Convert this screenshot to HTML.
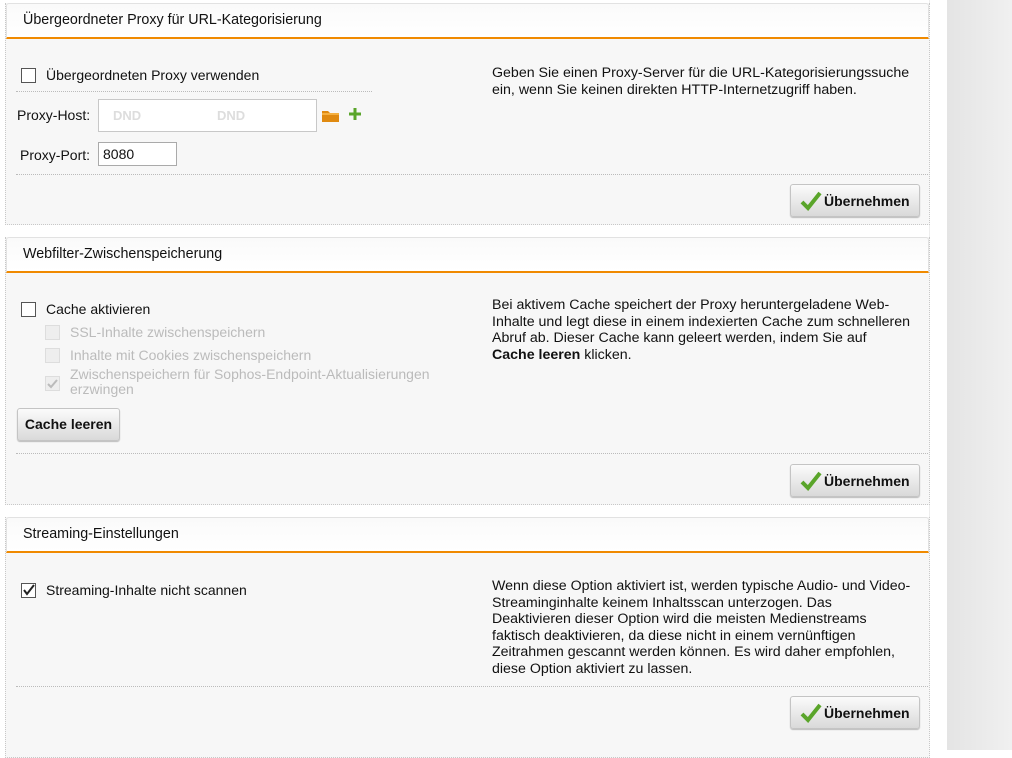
<!DOCTYPE html>
<html><head><style>
body{margin:0;width:1012px;height:750px;background:#fff;font-family:"Liberation Sans",Arial,sans-serif;font-size:14px;color:#111;position:relative;overflow:hidden}
.side{position:absolute;left:946px;top:0;width:66px;height:750px;background:linear-gradient(90deg,#e4e4e4,#f0f0f0)}
.panel{position:absolute;left:5px;width:923px;background:#f7f7f7;border:1px dotted #c8c8c8;border-top:none}
.hd{height:33px;background:linear-gradient(#fafafa,#fff);border:1px solid #e2e2e2;border-bottom:2px solid #f08a00;border-radius:3px 3px 0 0;padding-left:16px;line-height:33px;font-size:14.3px}
.a{position:absolute}
.cb{position:absolute;width:13px;height:13px;border:1px solid #555;background:#fff}
.cbd{border-color:#ddd;background:#eee}
.dots{position:absolute;border-top:1px dotted #bbb;height:0}
.btn{position:absolute;background:linear-gradient(#fbfbfb,#d9d9d9);border:1px solid #c4c4c4;border-radius:3px;font-weight:bold;font-size:14px;box-shadow:0 1px 1px #bbb}
.ok{width:128px;height:31px;left:784px}
.ok span{position:absolute;left:33px;top:8px}
.ok svg{position:absolute;left:9px;top:6px}
.gray{color:#bbb}
.txt{position:absolute;left:486px;width:440px;line-height:16.5px;font-size:14.2px;white-space:nowrap}
</style></head><body>
<div class="side"></div>
<div style="position:absolute;left:929px;top:0;width:17px;height:750px;background:#fff;border-left:1px solid #eee"></div>

<div class="panel" style="top:3px;height:221px">
<div class="hd">Übergeordneter Proxy für URL-Kategorisierung</div>
<div class="cb" style="left:15px;top:65px"></div>
<div class="a" style="left:40px;top:64px">Übergeordneten Proxy verwenden</div>
<div class="dots" style="left:10px;top:88px;width:356px"></div>
<div class="a" style="left:11px;top:104px">Proxy-Host:</div>
<div class="a" style="left:92px;top:96px;width:217px;height:31px;background:#fff;border:1px solid #c8c8c8;color:#ddd;font-weight:bold;font-size:13px"><span class="a" style="left:14px;top:8px">DND</span><span class="a" style="left:118px;top:8px">DND</span></div>
<svg class="a" style="left:315px;top:105px" width="20" height="15"><path d="M1 3h6l2 2h9v9H1z" fill="#e08a10"/><path d="M1 6h17" stroke="#f5b040" stroke-width="2"/></svg>
<svg class="a" style="left:342px;top:104px" width="14" height="14"><path d="M7 1v12M1 7h12" stroke="#5aa52a" stroke-width="3"/></svg>
<div class="a" style="left:14px;top:144px">Proxy-Port:</div>
<div class="a" style="left:92px;top:139px;width:73px;height:22px;background:#fff;border:1px solid #aaa;line-height:22px;padding-left:4px">8080</div>
<div class="dots" style="left:10px;top:171px;width:912px"></div>
<div class="txt" style="top:62px">Geben Sie einen Proxy-Server für die URL-Kategorisierungssuche<br>ein, wenn Sie keinen direkten HTTP-Internetzugriff haben.</div>
<div class="btn ok" style="top:181px"><svg width="22" height="20"><path d="M2 11l6 6L20 2" stroke="#5aa52a" stroke-width="4" fill="none"/></svg><span>Übernehmen</span></div>
</div>

<div class="panel" style="top:237px;height:267px">
<div class="hd">Webfilter-Zwischenspeicherung</div>
<div class="cb" style="left:15px;top:65px"></div>
<div class="a" style="left:40px;top:64px">Cache aktivieren</div>
<div class="cb cbd" style="left:39px;top:88px"></div>
<div class="a gray" style="left:64px;top:87px">SSL-Inhalte zwischenspeichern</div>
<div class="cb cbd" style="left:39px;top:111px"></div>
<div class="a gray" style="left:64px;top:110px">Inhalte mit Cookies zwischenspeichern</div>
<div class="cb cbd" style="left:39px;top:139px"><svg width="13" height="13"><path d="M2 7l3 3 6-7" stroke="#bbb" stroke-width="2" fill="none"/></svg></div>
<div class="a gray" style="left:64px;top:130px;line-height:15px">Zwischenspeichern für Sophos-Endpoint-Aktualisierungen<br>erzwingen</div>
<div class="btn" style="left:11px;top:171px;width:101px;height:31px;line-height:31px;text-align:center">Cache leeren</div>
<div class="dots" style="left:10px;top:216px;width:912px"></div>
<div class="txt" style="top:60px">Bei aktivem Cache speichert der Proxy heruntergeladene Web-<br>Inhalte und legt diese in einem indexierten Cache zum schnelleren<br>Abruf ab. Dieser Cache kann geleert werden, indem Sie auf<br><b>Cache leeren</b> klicken.</div>
<div class="btn ok" style="top:227px"><svg width="22" height="20"><path d="M2 11l6 6L20 2" stroke="#5aa52a" stroke-width="4" fill="none"/></svg><span>Übernehmen</span></div>
</div>

<div class="panel" style="top:517px;height:240px">
<div class="hd">Streaming-Einstellungen</div>
<div class="cb" style="left:15px;top:66px"><svg width="13" height="13"><path d="M2 6l3 4 7-9" stroke="#222" stroke-width="2" fill="none"/></svg></div>
<div class="a" style="left:40px;top:65px">Streaming-Inhalte nicht scannen</div>
<div class="txt" style="top:61px">Wenn diese Option aktiviert ist, werden typische Audio- und Video-<br>Streaminginhalte keinem Inhaltsscan unterzogen. Das<br>Deaktivieren dieser Option wird die meisten Medienstreams<br>faktisch deaktivieren, da diese nicht in einem vernünftigen<br>Zeitrahmen gescannt werden können. Es wird daher empfohlen,<br>diese Option aktiviert zu lassen.</div>
<div class="dots" style="left:10px;top:169px;width:912px"></div>
<div class="btn ok" style="top:179px"><svg width="22" height="20"><path d="M2 11l6 6L20 2" stroke="#5aa52a" stroke-width="4" fill="none"/></svg><span>Übernehmen</span></div>
</div>
</body></html>
